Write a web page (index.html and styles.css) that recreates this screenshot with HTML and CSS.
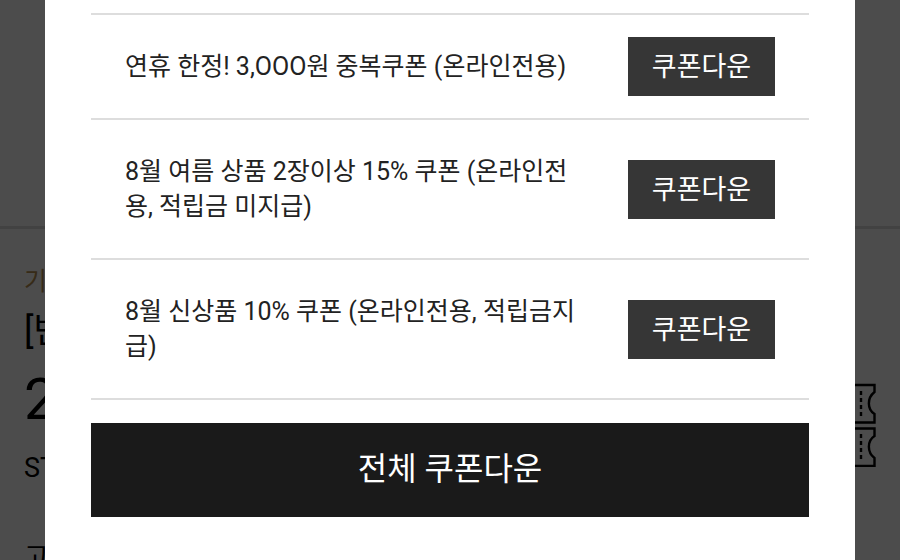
FILE: index.html
```html
<!DOCTYPE html>
<html lang="ko">
  <head>
    <meta charset="UTF-8" />
    <meta name="viewport" content="width=device-width, initial-scale=1.0" />
    <title>쿠폰다운</title>
    <link rel="stylesheet" href="styles.css">
  </head>
  <body>
    <main class="product">
      <div class="product-photo"></div>
      <div class="product-info">
        <p class="product-label">기</p>
        <h1 class="product-name">[반</h1>
        <div class="product-price">
          <span>2</span>
          <svg class="ticket" viewBox="0 0 60 84" fill="none" stroke="#000" stroke-width="2.4">
            <path d="M1 2H58.500V9C51 15 51 26 58.500 31V39.500H1V31C8 26 8 15 1 9Z" />
            <path d="M45 8V34" stroke-dasharray="4 3" />
            <path d="M1 45.500H58.500V53C51 58 51 69 58.500 75V83H1V75C8 69 8 58 1 53Z" />
            <path d="M45 51V77" stroke-dasharray="4 3" />
          </svg>
        </div>
        <p class="product-code">ST</p>
        <p class="product-more">고</p>
      </div>
    </main>

    <div class="overlay">
      <div class="popup" role="dialog" aria-modal="true" aria-label="쿠폰다운">
        <ul class="coupon-list">
          <li class="coupon">
            <p class="coupon-name">연휴 한정! 3,OOO원 중복쿠폰 (온라인전용)</p>
            <button class="coupon-btn" type="button">쿠폰다운</button>
          </li>
          <li class="coupon">
            <p class="coupon-name">8월 여름 상품 2장이상 15% 쿠폰 (온라인전용, 적립금 미지급)</p>
            <button class="coupon-btn" type="button">쿠폰다운</button>
          </li>
          <li class="coupon">
            <p class="coupon-name">8월 신상품 10% 쿠폰 (온라인전용, 적립금지급)</p>
            <button class="coupon-btn" type="button">쿠폰다운</button>
          </li>
        </ul>
        <button class="all-btn" type="button">전체 쿠폰다운</button>
      </div>
    </div>
  </body>
</html>
```

FILE: styles.css
```css
* {
  box-sizing: border-box;
  margin: 0;
  padding: 0;
}

body {
  height: 100vh;
  overflow: hidden;
  background-color: #fff;
  color: #000;
  font-family: Roboto, "Noto Sans CJK KR", sans-serif;
}

.product-photo {
  height: 226px;
}

.product-info {
  padding: 36px 24px 0;
  border-top: 3px solid #ddd;
}

.product-label {
  color: #b89050;
  font-size: 25px;
  line-height: 34px;
}

.product-name {
  margin-top: 10px;
  font-size: 36px;
  font-weight: 400;
  line-height: 44px;
}

.product-price {
  display: flex;
  justify-content: space-between;
  align-items: flex-start;
  margin-top: 30px;
  font-size: 58px;
  line-height: 32px;
}

.ticket {
  width: 60px;
  height: 84px;
  margin-bottom: -16px;
}

.product-code {
  font-size: 27px;
  line-height: 34px;
}

.product-more {
  margin-top: 56px;
  font-size: 27px;
  line-height: 34px;
}

.overlay {
  position: fixed;
  top: 0;
  left: 0;
  right: 0;
  bottom: 0;
  background-color: rgba(0, 0, 0, 0.7);
}

.popup {
  width: 90%;
  min-height: 100%;
  margin: 0 auto;
  padding: 13px 46px 44px;
  background-color: #fff;
}

.coupon-list {
  list-style: none;
  border-top: 2px solid #ddd;
}

.coupon {
  display: flex;
  justify-content: space-between;
  align-items: center;
  gap: 40px;
  padding: 22px 34px;
  border-bottom: 2px solid #ddd;
}

.coupon-name {
  padding: 12px 0;
  color: #222;
  font-size: 25px;
  line-height: 35px;
}

.coupon-btn {
  flex: none;
  width: 147px;
  height: 59px;
  padding-bottom: 4px;
  border: none;
  background-color: #363636;
  color: #fff;
  font-family: inherit;
  font-size: 27px;
  cursor: pointer;
}

.all-btn {
  display: block;
  width: 100%;
  height: 94px;
  margin-top: 23px;
  padding-bottom: 8px;
  border: none;
  background-color: #1a1a1a;
  color: #fff;
  font-family: inherit;
  font-size: 32px;
  cursor: pointer;
}
```
